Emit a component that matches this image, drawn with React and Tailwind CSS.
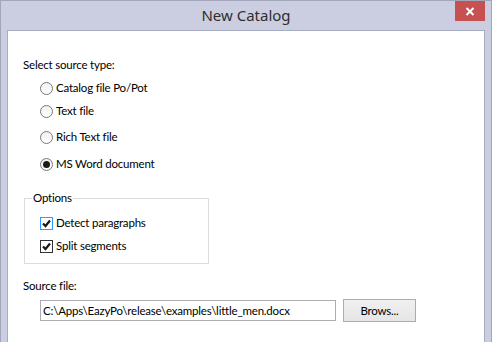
import React from 'react';

const font = { fontFamily: 'Lato, "Noto Sans", sans-serif' };

function Radio({ label, checked, className }) {
  return (
    <div className={`flex items-center h-[16px] ${className}`}>
      <div className="w-[13px] h-[13px] rounded-full border border-[#7a7a7a] bg-gradient-to-b from-[#f0f0f0] to-white flex items-center justify-center">
        {checked && <div className="w-[7px] h-[7px] rounded-full bg-[#1a1a1a]" />}
      </div>
      <span className="ml-[3px] text-[11.5px] tracking-[-0.2px] text-black leading-[16px]">{label}</span>
    </div>
  );
}

function Check({ label, focused, className }) {
  return (
    <div className={`flex items-center h-[16px] ${className}`}>
      <div
        className={`w-[13px] h-[13px] border bg-white flex items-center justify-center ${
          focused ? 'border-[#3399ff]' : 'border-[#333333]'
        }`}
      >
        <svg width="9" height="9" viewBox="0 0 9 9">
          <path d="M1 4.5 L3.5 7 L8 1.5" stroke="#1a1a1a" strokeWidth="2.2" fill="none" />
        </svg>
      </div>
      <span className="ml-[3px] text-[11.5px] tracking-[-0.2px] text-black leading-[16px]">{label}</span>
    </div>
  );
}

export default function App() {
  return (
    <div
      className="w-[492px] h-[342px] bg-[#cbcee0] border-l border-t border-r border-[#a3a6ba] flex flex-col overflow-hidden"
      style={font}
    >
      <div className="relative h-[29px] flex items-center justify-center shrink-0">
        <span className="text-[15px] text-[#2e2e2e] -mt-[1px]" style={{ fontFamily: '"Noto Sans", sans-serif' }}>
          New Catalog
        </span>
        <div className="absolute right-[6px] top-0 w-[30px] h-[20px] bg-[#c75050] flex items-center justify-center">
          <svg width="10" height="9" viewBox="0 0 10 9">
            <path d="M1.5 1 L8.5 8 M8.5 1 L1.5 8" stroke="white" strokeWidth="2" />
          </svg>
        </div>
      </div>
      <div className="ml-[6px] mr-[6px] flex-1 bg-white border-l border-t border-r border-[#a9acc0] pl-[15px] pt-[26px] text-[11.5px] tracking-[-0.2px]">
        <div className="leading-[16px] text-black">Select source type:</div>
        <div className="pl-[17px]">
          <Radio label="Catalog file Po/Pot" className="mt-[7px]" />
          <Radio label="Text file" className="mt-[7px]" />
          <Radio label="Rich Text file" className="mt-[10px]" />
          <Radio label="MS Word document" checked className="mt-[11px]" />
        </div>
        <fieldset className="ml-[1px] mt-[19px] w-[185px] h-[73px] border border-[#dcdcdc] pl-[15px]">
          <legend className="ml-[-8px] px-[1px] leading-[14px] text-black">Options</legend>
          <Check label="Detect paragraphs" focused className="mt-[10px]" />
          <Check label="Split segments" className="mt-[7px]" />
        </fieldset>
        <div className="mt-[14px] leading-[16px] text-black">Source file:</div>
        <div className="flex items-center pl-[17px] mt-[5px]">
          <div className="w-[296px] h-[21px] border border-[#abadb3] bg-white flex items-center pl-[2px] text-black">
            C:\Apps\EazyPo\release\examples\little_men.docx
          </div>
          <div className="ml-[7px] w-[73px] h-[23px] border border-[#acacac] bg-gradient-to-b from-[#f0f0f0] to-[#e5e5e5] flex items-center justify-center text-black">
            Brows...
          </div>
        </div>
      </div>
    </div>
  );
}
